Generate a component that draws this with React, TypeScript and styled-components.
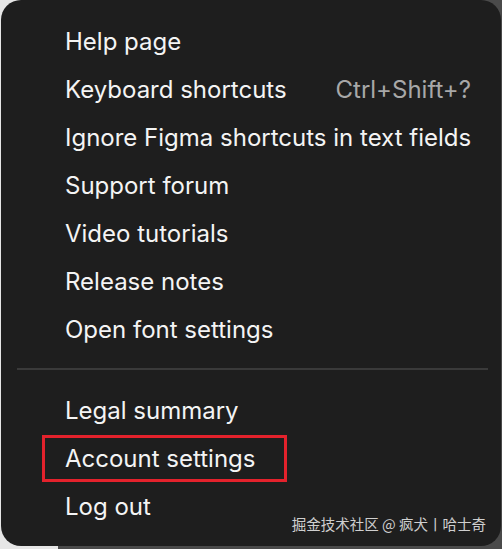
import React from 'react';
import styled, { createGlobalStyle } from 'styled-components';

const GlobalStyle = createGlobalStyle`
  html, body {
    margin: 0;
    padding: 0;
  }
  body {
    width: 502px;
    height: 549px;
    overflow: hidden;
    background: linear-gradient(to right, #e6e6e6 0 58px, #4a4a4a 58px);
    font-family: Inter, 'Noto Sans', sans-serif;
  }
`;

interface Entry {
  label: string;
  shortcut?: string;
  highlighted?: boolean;
}

const helpItems: Entry[] = [
  { label: 'Help page' },
  { label: 'Keyboard shortcuts', shortcut: 'Ctrl+Shift+?' },
  { label: 'Ignore Figma shortcuts in text fields' },
  { label: 'Support forum' },
  { label: 'Video tutorials' },
  { label: 'Release notes' },
  { label: 'Open font settings' },
];

const accountItems: Entry[] = [
  { label: 'Legal summary' },
  { label: 'Account settings', highlighted: true },
  { label: 'Log out' },
];

export default function App() {
  return (
    <>
      <GlobalStyle />
      <Menu>
        <Group>
          {helpItems.map((item) => (
            <MenuRow key={item.label} entry={item} />
          ))}
        </Group>
        <Divider />
        <Group>
          {accountItems.map((item) => (
            <MenuRow key={item.label} entry={item} />
          ))}
        </Group>
        <Watermark>掘金技术社区 @ 疯犬丨哈士奇</Watermark>
      </Menu>
    </>
  );
}

function MenuRow({ entry }: { entry: Entry }) {
  return (
    <Row>
      <Label $highlighted={entry.highlighted}>{entry.label}</Label>
      {entry.shortcut && <Shortcut>{entry.shortcut}</Shortcut>}
    </Row>
  );
}

const Menu = styled.div`
  position: relative;
  box-sizing: border-box;
  margin: 0 1px 0 1px;
  width: 500px;
  height: 546px;
  background: #1e1e1e;
  border-radius: 20px;
  padding: 17px 30px 0 0;
  display: flex;
  flex-direction: column;
`;

const Group = styled.div`
  display: flex;
  flex-direction: column;
`;

const Row = styled.div`
  height: 48px;
  display: flex;
  align-items: center;
  justify-content: space-between;
  padding-left: 64px;
  color: #f4f4f4;
  font-size: 24px;
  white-space: nowrap;
`;

const Label = styled.span<{ $highlighted?: boolean }>`
  display: inline-flex;
  align-items: center;
  box-sizing: border-box;
  ${({ $highlighted }) =>
    $highlighted &&
    `
    height: 47px;
    margin-left: -23px;
    padding: 0 28px 0 20px;
    border: 3px solid #e4222c;
  `}
`;

const Shortcut = styled.span`
  color: #a8a8a8;
`;

const Divider = styled.div`
  height: 2px;
  background: #3a3a3a;
  margin: 15px -17px 16px 16px;
`;

const Watermark = styled.div`
  position: absolute;
  right: 15px;
  bottom: 12px;
  font-family: 'Noto Sans CJK SC', 'Noto Sans', sans-serif;
  font-size: 14.5px;
  color: #cfcfcf;
  white-space: nowrap;
`;
